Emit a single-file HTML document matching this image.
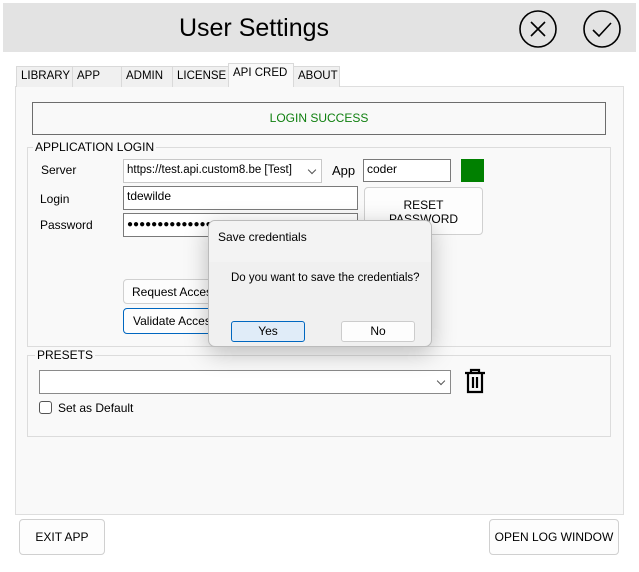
<!DOCTYPE html>
<html><head><style>
*{box-sizing:border-box;margin:0;padding:0}
body{width:639px;height:572px;background:#fff;font-family:"Liberation Sans",sans-serif;font-size:12px;color:#000;position:relative;overflow:hidden}
.a{position:absolute;white-space:nowrap}
.tab{position:absolute;top:66px;height:21px;background:#f0f0f0;border:1px solid #d9d9d9;border-bottom:none;font-size:11.5px;padding:3px 0 0 4px;white-space:nowrap;overflow:hidden}
.tb{position:absolute;background:#fff;border:1px solid #7a7a7a;padding:2px 3px;font-size:12px;white-space:nowrap;overflow:hidden}
.btn{position:absolute;background:#fdfdfd;border:1px solid #d0d0d0;border-radius:4px;font-size:12px;text-align:center;white-space:nowrap;overflow:hidden}
.grp{position:absolute;border:1px solid #dcdcdc}
.lg{position:absolute;background:#f9f9f9;padding:0 2px;top:-8px;left:6px;font-size:12px}
.chev{position:absolute;right:6px;top:7px;width:6px;height:6px;border-right:1px solid #555;border-bottom:1px solid #555;transform:rotate(45deg)}
</style></head><body>
<div class="a" style="left:3px;top:3px;width:633px;height:49px;background:#e3e3e3"></div>
<div class="a" style="left:0;width:508px;top:14px;text-align:center;font-size:25px">User Settings</div>
<svg class="a" style="left:518px;top:9px" width="40" height="40"><circle cx="20" cy="20" r="18" fill="none" stroke="#000" stroke-width="1.6"/><path d="M13 13L27 27M27 13L13 27" stroke="#000" stroke-width="1.6"/></svg>
<svg class="a" style="left:582px;top:9px" width="40" height="40"><circle cx="20" cy="20" r="18" fill="none" stroke="#000" stroke-width="1.6"/><path d="M11 21L17 27L29 14" fill="none" stroke="#000" stroke-width="1.6"/></svg>

<div class="a" style="left:15px;top:86px;width:609px;height:429px;background:#f9f9f9;border:1px solid #dedede"></div>
<div class="tab" style="left:16px;width:57px">LIBRARY</div>
<div class="tab" style="left:72px;width:50px">APP</div>
<div class="tab" style="left:121px;width:52px">ADMIN</div>
<div class="tab" style="left:172px;width:57px">LICENSE</div>
<div class="tab" style="left:228px;top:63px;height:24px;width:66px;background:#f9f9f9">API CRED</div>
<div class="tab" style="left:293px;width:47px">ABOUT</div>

<div class="a" style="left:32px;top:102px;width:574px;height:33px;border:1px solid #6d6d6d;color:#108010;text-align:center;line-height:31px">LOGIN SUCCESS</div>

<div class="grp" style="left:27px;top:147px;width:584px;height:200px"><span class="lg" style="left:5px">APPLICATION LOGIN</span></div>
<div class="a" style="left:41px;top:163px">Server</div>
<div class="tb" style="left:123px;top:159px;width:199px;height:24px;border-color:#c8c8c8;padding-top:4px;font-size:11.5px">https://test.api.custom8.be [Test]<span class="chev"></span></div>
<div class="a" style="left:332px;top:163px;font-size:13px">App</div>
<div class="tb" style="left:363px;top:159px;width:88px;height:23px">coder</div>
<div class="a" style="left:461px;top:159px;width:23px;height:23px;background:#008000"></div>
<div class="a" style="left:40px;top:192px">Login</div>
<div class="tb" style="left:123px;top:186px;width:235px;height:24px">tdewilde</div>
<div class="a" style="left:40px;top:218px">Password</div>
<div class="tb" style="left:123px;top:213px;width:235px;height:24px;font-size:10px;padding-top:5px">&#9679;&#9679;&#9679;&#9679;&#9679;&#9679;&#9679;&#9679;&#9679;&#9679;&#9679;&#9679;&#9679;&#9679;&#9679;</div>
<div class="btn" style="left:364px;top:187px;width:119px;height:48px;padding-top:10px;line-height:14px">RESET<br>PASSWORD</div>
<div class="btn" style="left:123px;top:279px;width:110px;height:25px;text-align:left;padding:5px 8px">Request Access</div>
<div class="btn" style="left:123px;top:308px;width:110px;height:26px;text-align:left;padding:5px 9px;border-color:#0067c0">Validate Access</div>

<div class="grp" style="left:27px;top:355px;width:584px;height:82px"><span class="lg" style="left:7px">PRESETS</span></div>
<div class="tb" style="left:39px;top:370px;width:412px;height:24px;border-color:#8a8a8a"><span class="chev"></span></div>
<svg class="a" style="left:462px;top:367px" width="26" height="28"><path d="M3 6H23M9 6V3H17V6M6 6V25H20V6M11 10V21M15 10V21" fill="none" stroke="#000" stroke-width="2.2"/></svg>
<div class="a" style="left:39px;top:401px;width:13px;height:13px;border:1px solid #555;border-radius:3px;background:#fff"></div>
<div class="a" style="left:58px;top:401px">Set as Default</div>

<div class="btn" style="left:19px;top:519px;width:86px;height:36px;line-height:34px">EXIT APP</div>
<div class="btn" style="left:489px;top:519px;width:130px;height:36px;line-height:34px">OPEN LOG WINDOW</div>

<div class="a" style="left:208px;top:220px;width:224px;height:127px;background:#f0f0f0;border:1px solid #bbb;border-radius:7px;box-shadow:0 6px 24px rgba(0,0,0,.25);overflow:hidden">
<div style="height:41px;background:#f3f3f3;padding:9px 0 0 9px">Save credentials</div>
<div style="position:absolute;left:22px;top:51px;font-size:11.5px">Do you want to save the credentials?</div>
<div style="position:absolute;left:22px;top:100px;width:74px;height:21px;background:#e0ecf8;border:1px solid #0067c0;border-radius:3px;text-align:center;line-height:19px">Yes</div>
<div style="position:absolute;left:132px;top:100px;width:74px;height:21px;background:#fdfdfd;border:1px solid #ccc;border-radius:3px;text-align:center;line-height:19px">No</div>
</div>
</body></html>
